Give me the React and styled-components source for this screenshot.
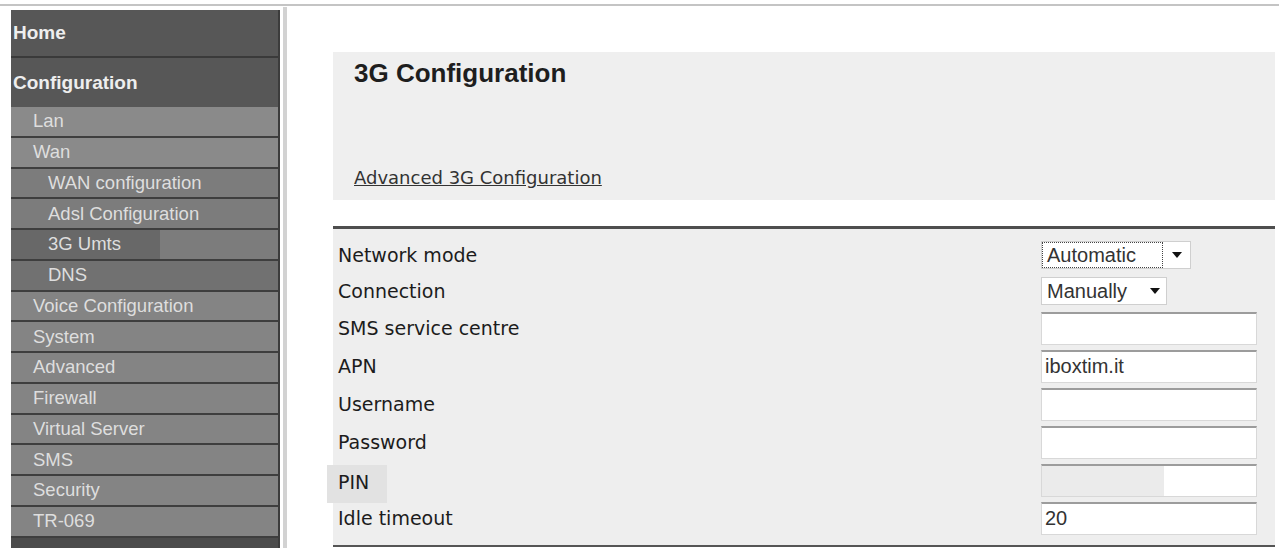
import React from "react";
import styled, { createGlobalStyle } from "styled-components";

const Global = createGlobalStyle`
  html, body { margin: 0; padding: 0; background: #fff; }
  body { font-family: "Liberation Sans", Arial, sans-serif; }
  * { box-sizing: border-box; }
`;

const Page = styled.div`
  width: 1279px;
  height: 548px;
  overflow: hidden;
  background: #fff;
  display: flex;
  flex-direction: column;
`;

const TopRule = styled.div`
  height: 2px;
  margin-top: 4px;
  background: #c4c4c4;
  flex: none;
`;

const Body = styled.div`
  flex: 1;
  display: flex;
  min-height: 0;
`;

const Sidebar = styled.nav`
  margin-left: 11px;
  margin-top: 4px;
  width: 269px;
  border-right: 2px solid #3c3c3c;
  background: #4c4c4c;
  display: flex;
  flex-direction: column;
  flex: none;
`;

const TopItem = styled.div`
  height: ${(p) => p.$h}px;
  display: flex;
  align-items: center;
  padding-left: 2px;
  background: #575757;
  border-bottom: ${(p) => (p.$sep ? "2px solid #3a3a3a" : "none")};
  color: #eeeeee;
  font: 700 19px "Liberation Sans", Arial, sans-serif;
`;

const tones = {
  light: "#8a8a8a",
  mid: "#7c7c7c",
  dark: "#717171",
  base: "#848484",
};

const NavItem = styled.div`
  height: 30.75px;
  display: flex;
  align-items: center;
  padding-left: ${(p) => (p.$level === 2 ? 37 : 22)}px;
  border-bottom: 2px solid #3e3e3e;
  background: ${(p) =>
    p.$active
      ? `linear-gradient(to right, #686868 0 149px, ${tones[p.$tone]} 149px)`
      : tones[p.$tone]};
  color: #dedede;
  font: 400 18.5px "Liberation Sans", Arial, sans-serif;
  white-space: nowrap;
`;

const Main = styled.main`
  flex: 1;
  margin-left: 3px;
  margin-top: 1px;
  border-left: 4px solid #d2d2d2;
  padding: 45px 4px 0 46px;
  display: flex;
  flex-direction: column;
`;

const HeaderPanel = styled.section`
  height: 148px;
  background: #efefef;
  display: flex;
  flex-direction: column;
  padding: 6px 0 12px 21px;
`;

const Title = styled.h1`
  margin: 0;
  font: 700 26px "Liberation Sans", Arial, sans-serif;
  line-height: 30px;
  color: #1e1e1e;
`;

const AdvLink = styled.a`
  margin-top: auto;
  align-self: flex-start;
  font: 400 18px "DejaVu Sans", Verdana, sans-serif;
  line-height: 21px;
  color: #333;
  text-decoration: underline;
  cursor: pointer;
`;

const FormPanel = styled.section`
  margin-top: 26px;
  border-top: 3px solid #4e4e4e;
  border-bottom: 2px solid #555;
  background: #eeeeee;
  padding: 8px 18px 8px 5px;
  display: flex;
  flex-direction: column;
`;

const Row = styled.div`
  height: ${(p) => p.$h}px;
  display: flex;
  align-items: center;
  justify-content: space-between;
`;

const Label = styled.span`
  font: 400 19px "DejaVu Sans", Verdana, sans-serif;
  line-height: 22px;
  color: #1c1c1c;
  ${(p) =>
    p.$highlight
      ? `background: #e2e2e2; margin-left: -11px; margin-top: 8px; padding: 6px 18px 10px 11px;`
      : ""}
`;

const Control = styled.div`
  width: 216px;
  display: flex;
  align-items: center;
`;

const SelectBox = styled.div`
  width: ${(p) => p.$w}px;
  height: 28px;
  border: 1px solid #cfcfcf;
  background: #fff;
  display: flex;
  align-items: stretch;
  font: 400 20px "Liberation Sans", Arial, sans-serif;
  color: #333;
`;

const SelectValue = styled.div`
  flex: 1;
  display: flex;
  align-items: center;
  padding-left: 4px;
  border: 1px dotted ${(p) => (p.$focused ? "#444" : "transparent")};
`;

const ArrowCell = styled.div`
  width: ${(p) => p.$w}px;
  display: flex;
  align-items: center;
  justify-content: center;
`;

const TextInput = styled.input`
  width: 216px;
  height: 33px;
  border: 1px solid #d8d8d8;
  border-top: 2px solid #9c9c9c;
  padding: 0 3px;
  font: 400 20px "Liberation Sans", Arial, sans-serif;
  color: #333;
  background: ${(p) =>
    p.$filled ? "linear-gradient(to right, #ebebeb 0 122px, #fff 122px)" : "#fff"};
  outline: none;
`;

const Caret = () => (
  <svg width="10" height="6" viewBox="0 0 10 6">
    <path d="M0 0 L10 0 L5 6 Z" fill="#111" />
  </svg>
);

const Select = ({ value, width, arrow, focused }) => (
  <SelectBox $w={width}>
    <SelectValue $focused={focused}>{value}</SelectValue>
    <ArrowCell $w={arrow}>
      <Caret />
    </ArrowCell>
  </SelectBox>
);

const nav = [
  { label: "Lan", level: 1, tone: "light" },
  { label: "Wan", level: 1, tone: "light" },
  { label: "WAN configuration", level: 2, tone: "mid" },
  { label: "Adsl Configuration", level: 2, tone: "mid" },
  { label: "3G Umts", level: 2, tone: "mid", active: true },
  { label: "DNS", level: 2, tone: "dark" },
  { label: "Voice Configuration", level: 1, tone: "base" },
  { label: "System", level: 1, tone: "base" },
  { label: "Advanced", level: 1, tone: "base" },
  { label: "Firewall", level: 1, tone: "base" },
  { label: "Virtual Server", level: 1, tone: "base" },
  { label: "SMS", level: 1, tone: "base" },
  { label: "Security", level: 1, tone: "base" },
  { label: "TR-069", level: 1, tone: "base" },
];

export default function App() {
  return (
    <>
      <Global />
      <Page>
        <TopRule />
        <Body>
          <Sidebar>
            <TopItem $h={48} $sep>Home</TopItem>
            <TopItem $h={49}>Configuration</TopItem>
            {nav.map((n) => (
              <NavItem key={n.label} $level={n.level} $tone={n.tone} $active={n.active}>
                {n.label}
              </NavItem>
            ))}
          </Sidebar>
          <Main>
            <HeaderPanel>
              <Title>3G Configuration</Title>
              <AdvLink>Advanced 3G Configuration</AdvLink>
            </HeaderPanel>
            <FormPanel>
              <Row $h={36}>
                <Label>Network mode</Label>
                <Control>
                  <Select value="Automatic" width={150} arrow={27} focused />
                </Control>
              </Row>
              <Row $h={36}>
                <Label>Connection</Label>
                <Control>
                  <Select value="Manually" width={126} arrow={22} />
                </Control>
              </Row>
              <Row $h={38}>
                <Label>SMS service centre</Label>
                <Control>
                  <TextInput defaultValue="" />
                </Control>
              </Row>
              <Row $h={38}>
                <Label>APN</Label>
                <Control>
                  <TextInput defaultValue="iboxtim.it" />
                </Control>
              </Row>
              <Row $h={38}>
                <Label>Username</Label>
                <Control>
                  <TextInput defaultValue="" />
                </Control>
              </Row>
              <Row $h={38}>
                <Label>Password</Label>
                <Control>
                  <TextInput type="password" defaultValue="" />
                </Control>
              </Row>
              <Row $h={38}>
                <Label $highlight>PIN</Label>
                <Control>
                  <TextInput $filled defaultValue="" />
                </Control>
              </Row>
              <Row $h={38}>
                <Label>Idle timeout</Label>
                <Control>
                  <TextInput defaultValue="20" />
                </Control>
              </Row>
            </FormPanel>
          </Main>
        </Body>
      </Page>
    </>
  );
}
